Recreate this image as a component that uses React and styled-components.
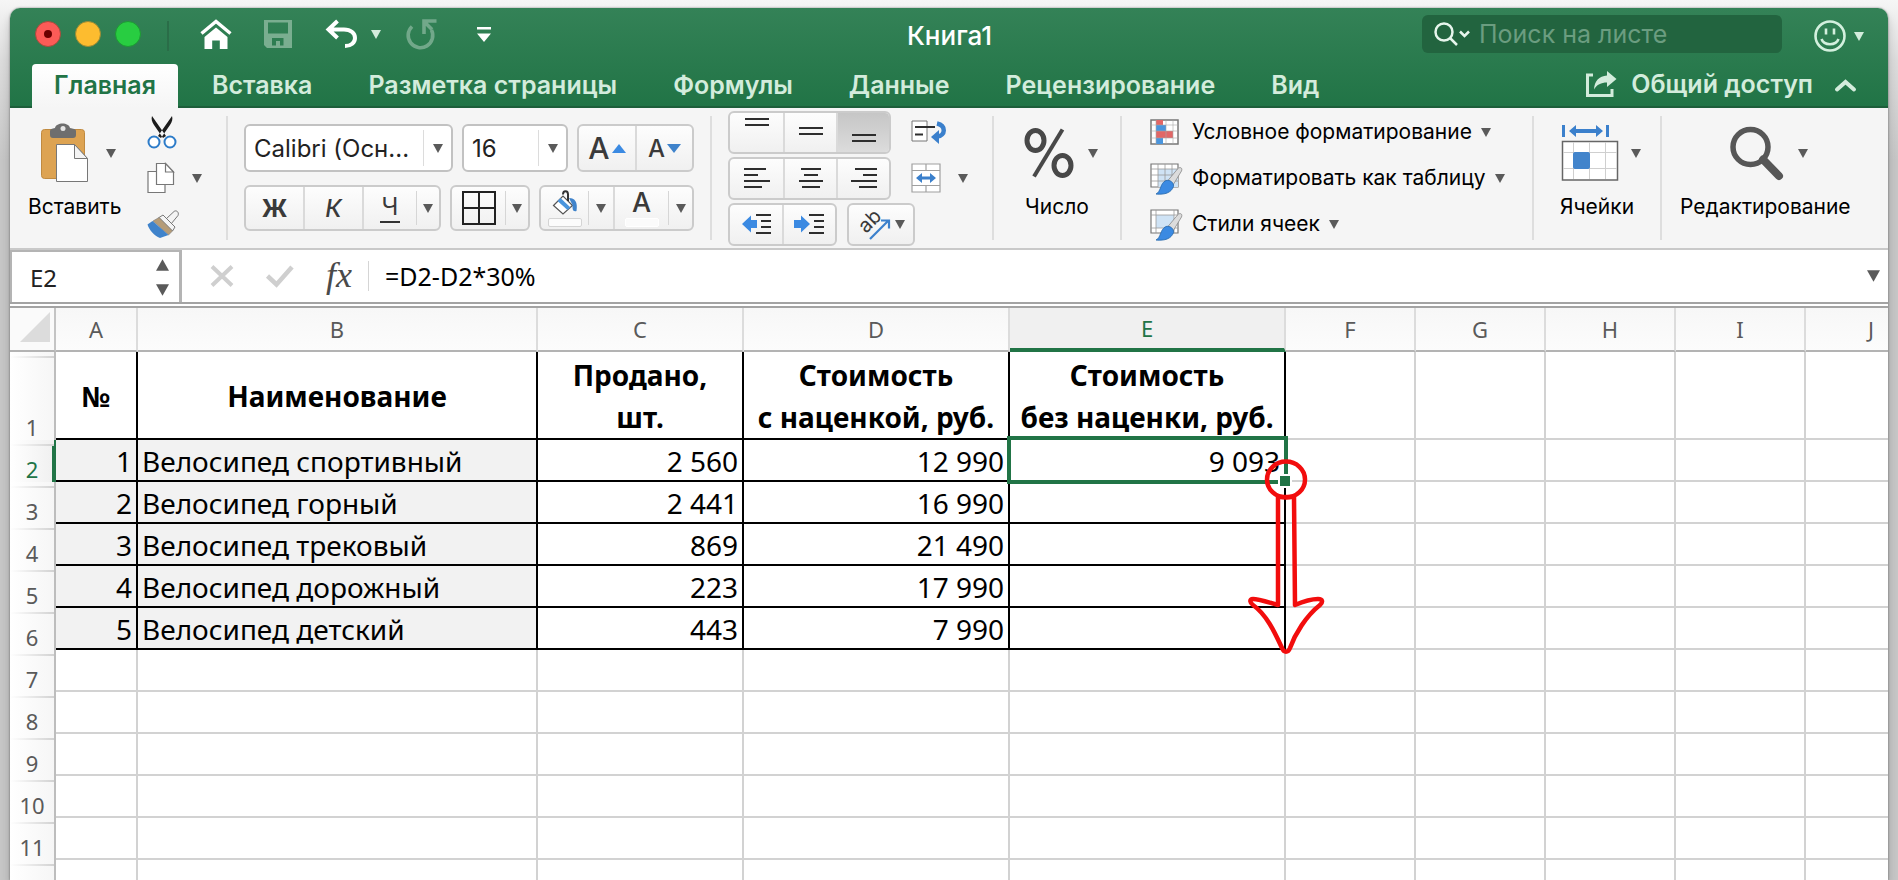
import React, { useState } from 'react';
import styled, { createGlobalStyle, css } from 'styled-components';

const uiFont = 'Inter, Roboto, sans-serif';
const sheetFont = '"Noto Sans", "Open Sans", sans-serif';

const GlobalStyle = createGlobalStyle`
  *, *::before, *::after { box-sizing: border-box; }
  body {
    margin: 0;
    background: linear-gradient(#f6f6f6 0, #dcdcdc 60px, #c6c6c6 160px);
    font-family: ${uiFont};
    color: #000;
  }
  button, input {
    font: inherit;
    color: inherit;
    background: none;
    border: 0;
    padding: 0;
    margin: 0;
    outline: none;
  }
  button { cursor: pointer; }
  svg { display: block; flex: none; overflow: visible; }
`;

const Page = styled.div`
  height: 100vh;
  padding: 8px 10px 0;
  overflow: hidden;
`;

const Window = styled.div`
  display: flex;
  flex-direction: column;
  height: 100%;
  overflow: hidden;
  background: #fff;
  border-radius: 10px 10px 0 0;
  box-shadow: 0 0 2px rgba(0, 0, 0, 0.5), 0 6px 10px rgba(0, 0, 0, 0.2);
`;

const Header = styled.header`
  flex: none;
  background: linear-gradient(#348257, #217446);
  border-bottom: 2px solid #1d5e3a;
  color: #d3ecdc;
`;

const TitleBar = styled.div`
  display: grid;
  grid-template-columns: 1fr auto 1fr;
  align-items: center;
  height: 56px;
  padding: 0 24px 0 25px;
`;

const QuickBar = styled.div`
  display: flex;
  align-items: center;
`;

const Lights = styled.div`
  display: flex;
  gap: 14px;
  padding: 0 26px 4px 0;
  border-right: 2px solid #2a6d48;
  margin-right: 31px;
`;

const Light = styled.button`
  display: grid;
  place-items: center;
  width: 26px;
  height: 26px;
  border-radius: 50%;
  border: 1px solid ${(p) => p.$edge};
  background: ${(p) => p.$color};

  &::after {
    content: '';
    width: 8px;
    height: 8px;
    border-radius: 50%;
    background: ${(p) => (p.$dot ? '#6b0000' : 'transparent')};
  }
`;

const QuickButton = styled.button`
  display: flex;
  align-items: center;
  gap: 14px;
  height: 36px;
  margin-right: ${(p) => p.$after || 0}px;
  padding-bottom: 4px;
`;

const Title = styled.h1`
  margin: 0;
  font-size: 26px;
  font-weight: 500;
  line-height: 56px;
  color: #fff;
`;

const TitleRight = styled.div`
  display: flex;
  align-items: center;
  justify-content: flex-end;
  gap: 32px;
`;

const SearchBox = styled.label`
  display: flex;
  align-items: center;
  gap: 9px;
  width: 360px;
  height: 38px;
  padding: 0 12px;
  margin-bottom: 4px;
  border-radius: 6px;
  background: #22643f;

  input {
    flex: 1;
    min-width: 0;
    font-size: 25px;
    color: #d3ecdc;
  }
  input::placeholder { color: #6b9d80; opacity: 1; }
`;

const TabRow = styled.div`
  display: flex;
  justify-content: space-between;
  height: 42px;
  padding: 0 32px 0 22px;
`;

const Tabs = styled.nav`
  display: flex;
  gap: 12px;
`;

const Tab = styled.button`
  height: 44px;
  padding: 0 22px 2px;
  border-radius: 4px 4px 0 0;
  font-size: 25px;
  font-weight: 600;
  line-height: 42px;
  ${(p) => p.$active && css`
    background: linear-gradient(#fff, #f5f5f5);
    color: #217446;
  `}
`;

const ShareArea = styled.div`
  display: flex;
  align-items: center;
  gap: 22px;
`;

const ShareButton = styled.button`
  display: flex;
  align-items: center;
  gap: 14px;
  padding-bottom: 2px;
  font-size: 25px;
  font-weight: 600;
`;

const Ribbon = styled.div`
  display: flex;
  flex: none;
  background: #f5f5f5;
  border-bottom: 2px solid #c9c9c9;
`;

const Separator = styled.div`
  align-self: center;
  flex: none;
  width: 2px;
  height: 124px;
  background: #dedede;
`;

const Group = styled.div`
  display: flex;
  flex: ${(p) => (p.$grow ? '1 0 auto' : 'none')};
  justify-content: ${(p) => (p.$center ? 'center' : 'flex-start')};
  width: ${(p) => (p.$width ? `${p.$width}px` : 'auto')};
  padding: 1px 18px 1px ${(p) => p.$left ?? 18}px;
`;

const BigButton = styled.button`
  display: flex;
  flex-direction: column;
  align-items: center;
  align-self: flex-start;
  gap: 12px;
  margin-top: 14px;
  font-size: 21px;
  line-height: 24px;
  white-space: nowrap;
`;

const BigIcon = styled.span`
  display: flex;
  align-items: center;
  gap: ${(p) => p.$gap || 14}px;
  height: 60px;
  padding-left: 8px;
`;

const ToolColumn = styled.div`
  display: flex;
  flex-direction: column;
  margin-left: ${(p) => p.$before || 0}px;
`;

const ToolRow = styled.div`
  display: flex;
  align-items: center;
  gap: ${(p) => p.$gap || 10}px;
  height: 46px;
`;

const ToolButton = styled.button`
  display: flex;
  align-items: center;
  gap: ${(p) => p.$gap || 9}px;
  font-size: 21px;
  line-height: 24px;
  white-space: nowrap;
`;

const FontRows = styled.div`
  display: flex;
  flex-direction: column;
  gap: 13px;
  padding-top: 15px;
`;

const FontRow = styled.div`
  display: flex;
  gap: ${(p) => p.$gap}px;
`;

const Combo = styled.div`
  display: flex;
  width: ${(p) => p.$width}px;
  height: 48px;
  border: 2px solid #c2c2c2;
  border-radius: 6px;
  background: #fff;

  input {
    flex: 1;
    min-width: 0;
    padding-left: 8px;
    font-size: 24px;
    color: #222;
  }
  button {
    display: grid;
    place-items: center;
    width: 28px;
    margin: 4px 0;
    border-left: 1px solid #dcdcdc;
  }
`;

const Segments = styled.div`
  display: flex;
  height: ${(p) => p.$height}px;
  border: 2px solid #cbcbcb;
  border-radius: 6px;
  background: linear-gradient(#fdfdfd, #f0f0f0);
  overflow: hidden;
`;

const Segment = styled.button`
  display: flex;
  align-items: center;
  justify-content: center;
  gap: 2px;
  width: ${(p) => p.$width}px;
  font-size: ${(p) => p.$size || 24}px;
  font-weight: ${(p) => p.$weight || 400};
  font-style: ${(p) => (p.$italic ? 'italic' : 'normal')};
  color: #3a3a3a;

  & + & { border-left: ${(p) => (p.$plain ? '0' : '2px solid #dadada')}; }
  ${(p) => p.$pressed && css`
    background: linear-gradient(#c6c6c6, #dcdcdc);
  `}
`;

const Thin = styled.span`
  align-self: stretch;
  width: 1px;
  margin: 4px 0;
  background: #d6d6d6;
`;

const Swatched = styled.span`
  display: flex;
  flex-direction: column;
  align-items: center;
  gap: 2px;
  line-height: 26px;

  &::after {
    content: '';
    width: 34px;
    height: 9px;
    border: 1px solid ${(p) => (p.$outlined ? '#d4d4d4' : '#fff')};
    border-radius: 2px;
    background: #fbfbfb;
  }
`;

const Underlined = styled.span`
  padding: 0 2px;
  line-height: 28px;
  border-bottom: 2px solid #333;
`;

const FormulaBar = styled.div`
  display: flex;
  align-items: center;
  flex: none;
  height: 58px;
  padding-right: 8px;
  background: #fff;
  border-bottom: 6px double #a3a3a3;
  font-family: ${sheetFont};
`;

const NameBox = styled.div`
  display: flex;
  align-self: stretch;
  width: 172px;
  margin-right: 28px;
  border: 2px solid #b4b4b4;
  border-right-width: 3px;
  border-bottom: 0;

  input {
    flex: 1;
    min-width: 0;
    padding-left: 18px;
    font-size: 24px;
    color: #222;
  }
  button {
    display: flex;
    flex-direction: column;
    justify-content: center;
    gap: 13px;
    padding-right: 10px;
  }
`;

const BarButtons = styled.div`
  display: flex;
  align-items: center;
  gap: 32px;
  padding-right: 16px;
  margin-right: 16px;
  border-right: 1px solid #d5d5d5;

  button { display: flex; }
`;

const FxButton = styled.button`
  height: 30px;
  font-family: "Liberation Serif", serif;
  font-size: 36px;
  font-style: italic;
  line-height: 28px;
  color: #4a4a4a;
`;

const FormulaInput = styled.input`
  flex: 1;
  min-width: 0;
  font-size: 25px;
`;

const Sheet = styled.main`
  flex: 1;
  min-height: 0;
  overflow: hidden;
  background: #fff;
`;

const Grid = styled.table`
  table-layout: fixed;
  width: 100%;
  border-collapse: separate;
  border-spacing: 0;
  font-family: ${sheetFont};
  font-size: 28px;
`;

const Corner = styled.td`
  height: 44px;
  padding: 0 4px 4px 0;
  border-right: 2px solid #c4c4c4;
  border-bottom: 2px solid #b3b3b3;
  background: #fafafa;

  svg { margin-left: auto; }
`;

const ColHead = styled.th`
  height: 44px;
  padding: 0;
  font-size: 22px;
  font-weight: 400;
  color: #5a5a5a;
  border-right: 2px solid #dcdcdc;
  border-bottom: 2px solid #b3b3b3;
  background: linear-gradient(#f7f7f7, #fcfcfc);

  &:last-child {
    padding-left: 48px;
    border-right: 0;
  }
  ${(p) => p.$active && css`
    color: #217446;
    background: #f0f0f0;
    border-bottom: 4px solid #217446;
  `}
`;

const RowHead = styled.th`
  height: 42px;
  padding: 0 0 2px;
  vertical-align: bottom;
  font-size: 22px;
  font-weight: 400;
  line-height: 22px;
  color: #5a5a5a;
  border-right: 2px solid #bdbdbd;
  background:
    linear-gradient(90deg, #fff, #d2d2d2) 0 4px / 100% 2px no-repeat,
    linear-gradient(90deg, #fff, #f6f6f6);
  ${(p) => p.$active && css`
    color: #217446;
    background:
      linear-gradient(#217446, #217446) 100% 6px / 2px 100% no-repeat,
      linear-gradient(90deg, #fff, #d2d2d2) 0 4px / 100% 2px no-repeat,
      linear-gradient(90deg, #fff, #f0f0f0);
    border-right-color: #217446;
  `}
`;

const Cell = styled.td`
  position: relative;
  padding: ${(p) => (p.$head ? 2 : 1)}px 4px 0;
  height: ${(p) => (p.$head ? 88 : 42)}px;
  line-height: ${(p) => (p.$head ? 42 : 38)}px;
  font-weight: ${(p) => (p.$head ? 700 : 400)};
  text-align: ${(p) => p.$align || 'right'};
  white-space: pre;
  border-right: 2px solid ${(p) => (p.$framed ? '#000' : '#d2d2d2')};
  border-bottom: 2px solid ${(p) => (p.$framed ? '#000' : '#d2d2d2')};
  background: ${(p) => (p.$shaded ? '#f2f2f2' : '#fff')};

  &:last-child { border-right: 0; }
`;

const Selection = styled.div`
  position: absolute;
  z-index: 1;
  inset: -4px -4px -4px -3px;
  border: 4px solid #217446;

  &::after {
    content: '';
    position: absolute;
    right: -8px;
    bottom: -8px;
    width: 14px;
    height: 14px;
    border: 2px solid #fff;
    background: #217446;
  }
`;

const DragHint = styled.svg`
  position: absolute;
  z-index: 2;
  top: 18px;
  right: -40px;
  width: 76px;
  height: 200px;
`;

const Caret = ({ size = 10, up, color = '#5a5a5a' }) => (
  <svg width={size} height={size - 1} viewBox="0 0 10 9" aria-hidden="true">
    <path d={up ? 'M0 9h10L5 0z' : 'M0 0h10L5 9z'} fill={color} />
  </svg>
);

const HomeIcon = () => (
  <svg width="32" height="30" viewBox="0 0 32 30">
    <path d="M1.5 14.5 16 2.5l14.5 12" fill="none" stroke="#fff" strokeWidth="3.4" />
    <path d="M16 8.5 27.5 18v12h-7.700v-8.500h-7.600V30H4.500V18z" fill="#fff" />
  </svg>
);

const SaveIcon = () => (
  <svg width="28" height="28" viewBox="0 0 28 28">
    <path d="M0 0h28v28H3l-3-3zM4 2.5v11h20v-11zM8 18v7.5h4V21h4v4.5h3.5V18z" fill="#7aae90" fillRule="evenodd" />
  </svg>
);

const UndoIcon = () => (
  <svg width="31" height="28" viewBox="0 0 31 28" fill="none" stroke="#fff" strokeWidth="4">
    <path d="M11.5 1 2.5 9.5l9 8.500M3 9.500h15c7 0 11 4 11 8.500s-4 8-10 8" />
  </svg>
);

const RedoIcon = () => (
  <svg width="30" height="30" viewBox="0 0 30 30" fill="none" stroke="#72a88a" strokeWidth="3.6">
    <path d="M5 7.5A12.300 12.300 0 1 0 24.5 11M17 15V2h12.500M17 2.500l8 8" />
  </svg>
);

const CustomizeIcon = () => (
  <svg width="14" height="15" viewBox="0 0 14 15" fill="#fff">
    <path d="M0 0h14v2.500H0zM0 6.500h14L7 15z" />
  </svg>
);

const SearchIcon = () => (
  <svg width="36" height="24" viewBox="0 0 36 24" fill="none" stroke="#e6f5ec" strokeWidth="2.5">
    <circle cx="10" cy="10" r="8.5" />
    <path d="m16 16 7 7M26 9.500l4.500 4.500L35 9.500" />
  </svg>
);

const SmileIcon = () => (
  <svg width="32" height="32" viewBox="0 0 32 32" fill="none" stroke="#d3f0de" strokeWidth="2.6">
    <circle cx="16" cy="16" r="14.5" />
    <path d="M12 8.500v6M20 8.500v6M7.500 19c2.500 7 14.500 7 17 0" />
  </svg>
);

const ShareIcon = () => (
  <svg width="31" height="26" viewBox="0 0 31 26">
    <path d="M7 4H1.500v20.500H26V18" fill="none" stroke="#d3ecdc" strokeWidth="3" />
    <path d="M21 0l9.500 8L21 16v-4.500c-6 0-10 2-13 7C8.500 10 13 5 21 4.500z" fill="#d3ecdc" />
  </svg>
);

const PasteIcon = () => (
  <svg width="47" height="60" viewBox="0 0 47 60">
    <rect x=".5" y="6.5" width="43" height="49" rx="3" fill="#dda352" stroke="#c08a40" />
    <path d="M9 8c0-2 2-2.500 5-3 1-6 14-6 15 0 3 .5 6 1 6 3v4c0 2-1 3-3 3H12c-2 0-3-1-3-3z" fill="#6e6e6e" />
    <circle cx="22" cy="5.5" r="2.5" fill="#e6e6e6" />
    <path d="M15.500 21.500h18l13 14v23h-31z" fill="#fff" stroke="#777" />
    <path d="M33.500 21.500v14h13z" fill="#f4f4f4" stroke="#777" />
  </svg>
);

const CutIcon = () => (
  <svg width="30" height="33" viewBox="0 0 30 33">
    <path d="M5 0c-1 3 0 6 2 9l9 13 3-2zM25 0c1 3 0 6-2 9l-9 13-3-2z" fill="#1c1c1c" />
    <g fill="#fff" stroke="#2d7cc9" strokeWidth="2">
      <circle cx="7" cy="26" r="5.5" />
      <circle cx="23" cy="26" r="5.5" />
    </g>
  </svg>
);

const CopyIcon = () => (
  <svg width="28" height="30" viewBox="0 0 28 30" fill="#fff" stroke="#777" strokeWidth="1.2">
    <path d="M1 8.500h17v21H1z" />
    <path d="M9.500.5h9L26.500 9v12.500h-17z" />
    <path d="M18.500.5V9h8z" />
  </svg>
);

const BrushIcon = () => (
  <svg width="33" height="29" viewBox="0 0 33 29">
    <path d="M19 9 27 1.500c2-1.800 5.500.5 4 4L24 14z" fill="#f4f4f4" stroke="#777" />
    <path d="m12 7.500 4-2.500 12 12-2.500 4z" fill="#f4f4f4" stroke="#777" />
    <path d="m12 7.500 13.500 13.500-4 4L6 11z" fill="#b59c78" stroke="#777" strokeWidth=".6" />
    <path d="m5.500 11-5 3.500c2 6 6.500 11 12.500 13.500l8.500-3z" fill="#3f83cb" />
  </svg>
);

const GridIcon = () => (
  <svg width="34" height="34" viewBox="0 0 34 34" fill="none" stroke="#222" strokeWidth="2">
    <path d="M1 1h32v32H1zM17 1v32M1 17h32" />
  </svg>
);

const BucketIcon = () => (
  <svg width="26" height="26" viewBox="0 0 26 26">
    <path d="M1.500 15.500 11 6l9.500 9.500L11 24z" fill="#fff" stroke="#555" strokeWidth="1.2" />
    <path d="m5.500 11 3-3 10 9.500-3 2.500z" fill="#4a95dd" />
    <path d="M11 4.500C11 0 16 0 16 4.500V11" fill="none" stroke="#333" strokeWidth="2" />
    <path d="M17 8c6 0 9 4 7.500 13-4 1-4-2-4-6z" fill="#3f83cb" />
  </svg>
);

const LinesIcon = ({ rows }) => (
  <svg width="26" height="30" viewBox="0 0 26 30" stroke="#2e2e2e" strokeWidth="2">
    {rows.map(([x1, x2, y]) => (
      <path key={y} d={`M${x1} ${y}H${x2}`} />
    ))}
  </svg>
);

const IndentIcon = ({ right }) => (
  <svg width="31" height="22" viewBox="0 0 31 22">
    <path d="M15 2h15M20 8h10M20 14h10M15 20h15" stroke="#2e2e2e" strokeWidth="2" />
    <path
      d={right ? 'M0 7h7V2.500L16 11l-9 8.500V15H0z' : 'M16 7h-6V2.500L1 11l9 8.500V15h6z'}
      fill="#3b8ae2"
    />
  </svg>
);

const RotateText = () => (
  <svg width="36" height="38" viewBox="0 0 36 38">
    <text transform="translate(9 29) rotate(-45)" fontFamily="Inter, sans-serif" fontSize="20" fill="#3a3a3a">ab</text>
    <path d="M13 34 31 16M24 15.500h8v8" fill="none" stroke="#3b80cc" strokeWidth="2.2" />
  </svg>
);

const WrapIcon = () => (
  <svg width="36" height="26" viewBox="0 0 36 26" fill="none">
    <path d="M1 2h15v20H1z" fill="#fff" stroke="#777" />
    <path d="M4 8h20M4 15.500h8" stroke="#2e2e2e" strokeWidth="2" />
    <path d="M26 4.500c9 2 9 12 0 13" stroke="#3b80cc" strokeWidth="4.5" />
    <path d="M28 11v14l-8-7z" fill="#3b80cc" />
  </svg>
);

const MergeIcon = () => (
  <svg width="30" height="30" viewBox="0 0 30 30">
    <path d="M1 1h28v28H1zM1 7.500h28M1 22.500h28M15 1v6.500M15 22.500V29" fill="#fff" stroke="#a0a0a0" strokeWidth="1.2" />
    <path d="M5 15l6-5v3.500h8V10l6 5-6 5v-3.500h-8V20z" fill="#3b80cc" />
  </svg>
);

const PercentIcon = () => (
  <svg width="50" height="50" viewBox="0 0 50 50" fill="none" stroke="#484848">
    <ellipse cx="11.5" cy="12.5" rx="8.5" ry="10" strokeWidth="5" />
    <ellipse cx="38.5" cy="37.5" rx="8.5" ry="10" strokeWidth="5" />
    <path d="M38.500 1.500 10 48.500" strokeWidth="4" />
  </svg>
);

const StyleBrush = () => (
  <g>
    <path d="m17.500 18 10-12c2-2.500 5.500-1.500 4 2L23 22z" fill="#dcdcdc" stroke="#888" strokeWidth=".8" />
    <path d="M16 17.500c4-1 8 2 7.500 6C21.500 29.500 15 32 6 31c5-2 4-11 10-13.500z" fill="#3b8ae2" stroke="#2467ab" strokeWidth=".8" />
  </g>
);

const ConditionalIcon = () => (
  <svg width="33" height="26" viewBox="0 0 33 26">
    <path d="M1 1h27v24H1z" fill="#fff" stroke="#777" strokeWidth="1.5" />
    <path d="M6 1h7v5H6z" fill="#e26767" />
    <path d="M6 6h10v6H6z" fill="#4a95dd" />
    <path d="M6 12h17v7H6z" fill="#e26767" />
    <path d="M6 19h7v6H6z" fill="#4a95dd" />
    <path d="M6 1v24M16 1v24M23 1v24M1 6h27M1 12h27M1 19h27" stroke="#aaa" strokeWidth=".6" />
  </svg>
);

const TableStyleIcon = () => (
  <svg width="33" height="31" viewBox="0 0 33 31">
    <path d="M1 1h27v23H1z" fill="#fff" stroke="#777" strokeWidth="1.2" />
    <path d="M8 6h20v18H8z" fill="#cfe3f5" />
    <path d="M8 1v23M15 1v23M22 1v23M1 6h27M1 12h27M1 18h27" stroke="#9a9a9a" strokeWidth=".8" />
    <StyleBrush />
  </svg>
);

const CellStyleIcon = () => (
  <svg width="33" height="31" viewBox="0 0 33 31">
    <path d="M1 1h27v23H1z" fill="#fff" stroke="#777" strokeWidth="1.2" />
    <path d="M6 6h18v13H6z" fill="#cfe3f5" />
    <path d="M6 1v23M24 1v23M1 6h27M1 19h27" stroke="#9a9a9a" strokeWidth=".8" />
    <StyleBrush />
  </svg>
);

const CellsIcon = () => (
  <svg width="58" height="56" viewBox="0 0 58 56">
    <path d="M1 0h3v12H1zM45 0h3v12h-3zM8 6l7-6v4h20V0l7 6-7 6V8H15v4z" fill="#3b80cc" />
    <path d="M1.500 16.500h55V55h-55z" fill="#fff" stroke="#666" strokeWidth="1.5" />
    <path d="M12.500 17v37M28.500 17v37M44.500 17v37M2 27.500h54M2 43.500h54" stroke="#cfcfcf" />
    <rect x="12" y="27" width="17" height="17" rx="2" fill="#4284cb" />
  </svg>
);

const LensIcon = () => (
  <svg width="54" height="54" viewBox="0 0 54 54" fill="none" stroke="#575757">
    <circle cx="20.5" cy="21" r="17.5" strokeWidth="5.5" />
    <path d="M33 33.500 49 50" strokeWidth="8" strokeLinecap="round" />
  </svg>
);

const tabs = ['Главная', 'Вставка', 'Разметка страницы', 'Формулы', 'Данные', 'Рецензирование', 'Вид'];

const vertical = [
  { label: 'По верхнему краю', rows: [[1, 25, 2], [1, 25, 8]] },
  { label: 'По середине', rows: [[1, 25, 11], [1, 25, 17]] },
  { label: 'По нижнему краю', rows: [[1, 25, 18], [1, 25, 24]] },
];

const horizontal = [
  { label: 'По левому краю', rows: [[0, 22, 6], [0, 14, 12], [0, 26, 18], [0, 18, 24]] },
  { label: 'По центру', rows: [[3, 23, 6], [6, 20, 12], [1, 25, 18], [4, 22, 24]] },
  { label: 'По правому краю', rows: [[4, 26, 6], [12, 26, 12], [0, 26, 18], [8, 26, 24]] },
];

// the last column takes whatever width is left
const columns = [
  { name: 'A', width: 82 },
  { name: 'B', width: 400 },
  { name: 'C', width: 206 },
  { name: 'D', width: 266 },
  { name: 'E', width: 276 },
  { name: 'F', width: 130 },
  { name: 'G', width: 130 },
  { name: 'H', width: 130 },
  { name: 'I', width: 130 },
  { name: 'J' },
];

const data = [
  ['№', 'Наименование', 'Продано,\nшт.', 'Стоимость\nс наценкой, руб.', 'Стоимость\nбез наценки, руб.'],
  ['1', 'Велосипед спортивный', '2 560', '12 990', '9 093'],
  ['2', 'Велосипед горный', '2 441', '16 990', ''],
  ['3', 'Велосипед трековый', '869', '21 490', ''],
  ['4', 'Велосипед дорожный', '223', '17 990', ''],
  ['5', 'Велосипед детский', '443', '7 990', ''],
];

const rowCount = 12;

const SheetCell = ({ row, col }) => {
  const framed = row < data.length && col < 5;
  const head = row === 0;
  const selected = row === 1 && col === 4;
  const align = head ? 'center' : col === 1 ? 'left' : 'right';

  return (
    <Cell $head={head} $framed={framed} $align={align} $shaded={framed && !head && col < 2}>
      {framed ? data[row][col] : ''}
      {selected && (
        <>
          <Selection />
          <DragHint viewBox="0 0 76 200" fill="none" stroke="#f20d0d" strokeWidth="4.5" strokeLinejoin="round">
            <ellipse cx="38" cy="21.5" rx="19" ry="18" />
            <path d="M29 39h18M30 39v108C20 144 10 141 5 141c-4 0-3 4 0 6 14 10 22 28 29 43 2 5 6 5 8 0 5-14 16-32 30-43 3-3 3-6-2-6-8 0-16 3-23 6L46 39" />
          </DragHint>
        </>
      )}
    </Cell>
  );
};

const App = () => {
  const [activeTab, setActiveTab] = useState('Главная');
  const [formula, setFormula] = useState('=D2-D2*30%');

  return (
    <Page>
      <GlobalStyle />
      <Window>
        <Header>
          <TitleBar>
            <QuickBar>
              <Lights>
                <Light aria-label="Закрыть" $color="#fc5b57" $edge="#a84a3c" $dot />
                <Light aria-label="Свернуть" $color="#fdbc2f" $edge="#9a8a36" />
                <Light aria-label="Развернуть" $color="#28cd41" $edge="#1d9a33" />
              </Lights>
              <QuickButton aria-label="Домой" $after={32}><HomeIcon /></QuickButton>
              <QuickButton aria-label="Сохранить" $after={34}><SaveIcon /></QuickButton>
              <QuickButton aria-label="Отменить" $after={26}>
                <UndoIcon />
                <Caret color="#d3ecdc" />
              </QuickButton>
              <QuickButton aria-label="Повторить" $after={40}><RedoIcon /></QuickButton>
              <QuickButton aria-label="Настройка панели"><CustomizeIcon /></QuickButton>
            </QuickBar>
            <Title>Книга1</Title>
            <TitleRight>
              <SearchBox>
                <SearchIcon />
                <input type="search" placeholder="Поиск на листе" aria-label="Поиск на листе" />
              </SearchBox>
              <ToolButton aria-label="Отзыв" $gap={8}><SmileIcon /><Caret color="#d3ecdc" /></ToolButton>
            </TitleRight>
          </TitleBar>
          <TabRow>
            <Tabs>
              {tabs.map((name) => (
                <Tab key={name} $active={name === activeTab} onClick={() => setActiveTab(name)}>{name}</Tab>
              ))}
            </Tabs>
            <ShareArea>
              <ShareButton><ShareIcon />Общий доступ</ShareButton>
              <button aria-label="Свернуть ленту">
                <svg width="21" height="13" viewBox="0 0 21 13" fill="none" stroke="#d3ecdc" strokeWidth="4" strokeLinecap="round">
                  <path d="m2 10.500 8.500-7.500 8.500 7.500" />
                </svg>
              </button>
            </ShareArea>
          </TabRow>
        </Header>

        <Ribbon>
          <Group $width={216}>
            <BigButton>
              <BigIcon $gap={18}><PasteIcon /><Caret /></BigIcon>
              Вставить
            </BigButton>
            <ToolColumn $before={26}>
              <ToolRow><ToolButton aria-label="Вырезать"><CutIcon /></ToolButton></ToolRow>
              <ToolRow><ToolButton aria-label="Копировать" $gap={17}><CopyIcon /><Caret /></ToolButton></ToolRow>
              <ToolRow><ToolButton aria-label="Формат по образцу"><BrushIcon /></ToolButton></ToolRow>
            </ToolColumn>
          </Group>
          <Separator />

          <Group $width={482} $left={16}>
            <FontRows>
              <FontRow $gap={9}>
                <Combo $width={209}>
                  <input aria-label="Шрифт" defaultValue="Calibri (Осн..." />
                  <button aria-label="Список шрифтов"><Caret /></button>
                </Combo>
                <Combo $width={106}>
                  <input aria-label="Размер шрифта" defaultValue="16" />
                  <button aria-label="Список размеров"><Caret /></button>
                </Combo>
                <Segments $height={48}>
                  <Segment $width={56} $size={30} $weight={500} aria-label="Увеличить шрифт">
                    A
                    <svg width="14" height="9" viewBox="0 0 14 9"><path d="M0 9h14L7 0z" fill="#3b8ae2" /></svg>
                  </Segment>
                  <Segment $width={57} $weight={500} aria-label="Уменьшить шрифт">
                    A
                    <svg width="14" height="9" viewBox="0 0 14 9"><path d="M0 0h14L7 9z" fill="#3f83cb" /></svg>
                  </Segment>
                </Segments>
              </FontRow>
              <FontRow $gap={9}>
                <Segments $height={46}>
                  <Segment $width={57} $weight={700} aria-label="Полужирный">Ж</Segment>
                  <Segment $width={59} $weight={500} $italic aria-label="Курсив">К</Segment>
                  <Segment $width={54} aria-label="Подчёркнутый"><Underlined>Ч</Underlined></Segment>
                  <Thin />
                  <Segment $width={22} aria-label="Вид подчёркивания" $plain><Caret /></Segment>
                </Segments>
                <Segments $height={46}>
                  <Segment $width={53} aria-label="Границы"><GridIcon /></Segment>
                  <Thin />
                  <Segment $width={22} aria-label="Вид границ" $plain><Caret /></Segment>
                </Segments>
                <Segments $height={46}>
                  <Segment $width={47} aria-label="Цвет заливки"><Swatched $outlined><BucketIcon /></Swatched></Segment>
                  <Thin />
                  <Segment $width={24} aria-label="Выбор заливки" $plain><Caret /></Segment>
                  <Segment $width={55} $size={27} $weight={500} aria-label="Цвет текста"><Swatched>A</Swatched></Segment>
                  <Thin />
                  <Segment $width={23} aria-label="Выбор цвета" $plain><Caret /></Segment>
                </Segments>
              </FontRow>
            </FontRows>
          </Group>
          <Separator />

          <Group $width={280} $left={16}>
            <ToolColumn>
              <ToolRow>
                <Segments $height={43}>
                  {vertical.map(({ label, rows }, i) => (
                    <Segment key={label} $width={53} $pressed={i === 2} aria-label={label}><LinesIcon rows={rows} /></Segment>
                  ))}
                </Segments>
              </ToolRow>
              <ToolRow>
                <Segments $height={43}>
                  {horizontal.map(({ label, rows }) => (
                    <Segment key={label} $width={53} aria-label={label}><LinesIcon rows={rows} /></Segment>
                  ))}
                </Segments>
              </ToolRow>
              <ToolRow>
                <Segments $height={43}>
                  <Segment $width={52} aria-label="Уменьшить отступ"><IndentIcon /></Segment>
                  <Segment $width={53} aria-label="Увеличить отступ"><IndentIcon right /></Segment>
                </Segments>
                <Segments $height={43}>
                  <Segment $width={64} aria-label="Ориентация"><RotateText /><Caret /></Segment>
                </Segments>
              </ToolRow>
            </ToolColumn>
            <ToolColumn $before={-4}>
              <ToolRow><ToolButton aria-label="Перенос текста"><WrapIcon /></ToolButton></ToolRow>
              <ToolRow><ToolButton aria-label="Объединить" $gap={17}><MergeIcon /><Caret /></ToolButton></ToolRow>
            </ToolColumn>
          </Group>
          <Separator />

          <Group $width={126} $center>
            <BigButton>
              <BigIcon><PercentIcon /><Caret /></BigIcon>
              Число
            </BigButton>
          </Group>
          <Separator />

          <Group $width={410} $left={28}>
            <ToolColumn>
              <ToolRow><ToolButton><ConditionalIcon />Условное форматирование<Caret /></ToolButton></ToolRow>
              <ToolRow><ToolButton><TableStyleIcon />Форматировать как таблицу<Caret /></ToolButton></ToolRow>
              <ToolRow><ToolButton><CellStyleIcon />Стили ячеек<Caret /></ToolButton></ToolRow>
            </ToolColumn>
          </Group>
          <Separator />

          <Group $width={126} $center>
            <BigButton>
              <BigIcon $gap={12}><CellsIcon /><Caret /></BigIcon>
              Ячейки
            </BigButton>
          </Group>
          <Separator />

          <Group $grow>
            <BigButton>
              <BigIcon><LensIcon /><Caret /></BigIcon>
              Редактирование
            </BigButton>
          </Group>
        </Ribbon>

        <FormulaBar>
          <NameBox>
            <input aria-label="Имя ячейки" defaultValue="E2" />
            <button aria-label="Выбор ячейки"><Caret size={13} up /><Caret size={13} /></button>
          </NameBox>
          <BarButtons>
            <button aria-label="Отмена">
              <svg width="24" height="22" viewBox="0 0 24 22" stroke="#cfcfcf" strokeWidth="4"><path d="M2 1.500 22 20.500M22 1.500 2 20.500" /></svg>
            </button>
            <button aria-label="Ввод">
              <svg width="28" height="22" viewBox="0 0 28 22" fill="none" stroke="#cfcfcf" strokeWidth="4.5"><path d="m1.500 11 9 8.500L26 2" /></svg>
            </button>
            <FxButton aria-label="Вставить функцию">fx</FxButton>
          </BarButtons>
          <FormulaInput aria-label="Строка формул" value={formula} onChange={(e) => setFormula(e.target.value)} />
          <button aria-label="Развернуть строку формул"><Caret size={13} /></button>
        </FormulaBar>

        <Sheet>
          <Grid>
            <colgroup>
              <col width="46" />
              {columns.map(({ name, width }) => <col key={name} width={width} />)}
            </colgroup>
            <thead>
              <tr>
                <Corner>
                  <svg width="30" height="30" viewBox="0 0 30 30"><path d="M30 0v30H0z" fill="#dcdcdc" /></svg>
                </Corner>
                {columns.map(({ name }) => (
                  <ColHead key={name} scope="col" $active={name === 'E'}>{name}</ColHead>
                ))}
              </tr>
            </thead>
            <tbody>
              {Array.from({ length: rowCount }, (_, row) => (
                <tr key={row}>
                  <RowHead scope="row" $active={row === 1}>{row + 1}</RowHead>
                  {columns.map(({ name }, col) => <SheetCell key={name} row={row} col={col} />)}
                </tr>
              ))}
            </tbody>
          </Grid>
        </Sheet>
      </Window>
    </Page>
  );
};

export default App;
